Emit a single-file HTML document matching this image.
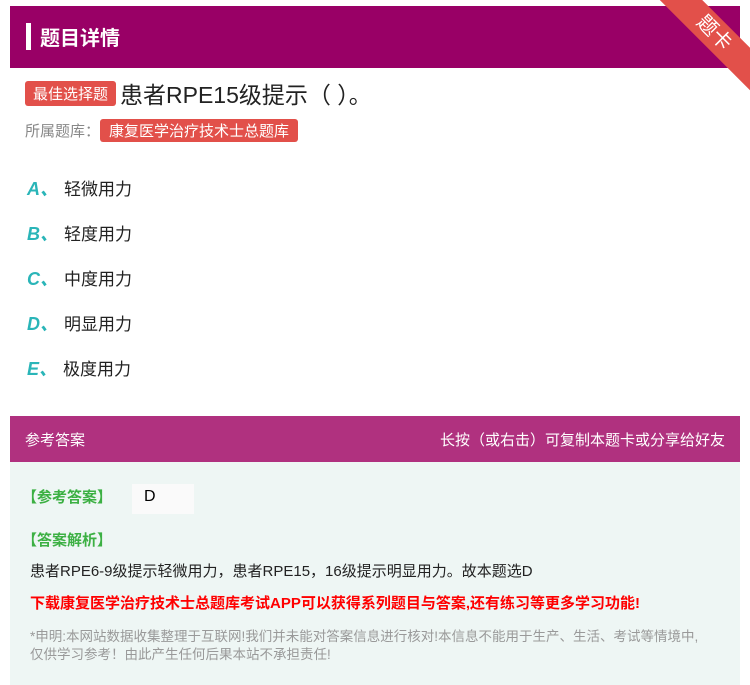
<!DOCTYPE html>
<html><head><meta charset="utf-8"><style>
body{margin:0;width:750px;height:685px;background:#fff;font-family:"Liberation Sans","Noto Sans CJK SC",sans-serif;position:relative;overflow:hidden}
.hd{position:absolute;left:10px;top:6px;width:730px;height:62px;background:#990066}
.hd .bar{position:absolute;left:16px;top:17px;width:5px;height:27px;background:#fff}
.hd .t{position:absolute;left:30px;top:16px;color:#fff;font-size:20px;font-weight:bold}
.rib{position:absolute;right:-34px;top:18px;width:140px;height:30px;background:#e2504a;transform:rotate(45deg);color:#fff;text-align:center;font-size:20px;line-height:30px;transform-origin:center}
.tag{display:inline-block;background:#e2504a;color:#fff;border-radius:3px}
.q{position:absolute;left:25px;top:76px;font-size:23px;color:#222}
.q .tag{font-size:15px;padding:2px 8px;vertical-align:4px;margin-right:4px}
.lib{position:absolute;left:25px;top:119px;font-size:15px;color:#888}
.lib .tag{font-size:15px;padding:1px 9px}
.opt{position:absolute;left:27px;font-size:17px;color:#222}
.opt b{color:#2ab5b8;font-style:italic;font-size:18px;margin-right:6px}
.ah{position:absolute;left:10px;top:416px;width:730px;height:46px;background:#b0317f;color:#fff;font-size:15px}
.ab{position:absolute;left:10px;top:462px;width:730px;height:223px;background:#eef6f4}
.g{color:#3cb043;font-weight:bold;font-size:15px}
</style></head><body>
<div class="hd"><div class="bar"></div><div class="t">题目详情</div></div>
<div class="rib">题卡</div>
<div class="q"><span class="tag">最佳选择题</span>患者RPE15级提示（ ）。</div>
<div class="lib">所属题库：<span class="tag">康复医学治疗技术士总题库</span></div>
<div class="opt" style="top:175px"><b>A、</b>轻微用力</div>
<div class="opt" style="top:220px"><b>B、</b>轻度用力</div>
<div class="opt" style="top:265px"><b>C、</b>中度用力</div>
<div class="opt" style="top:310px"><b>D、</b>明显用力</div>
<div class="opt" style="top:355px"><b>E、</b>极度用力</div>
<div class="ah"><span style="position:absolute;left:15px;top:13px">参考答案</span><span style="position:absolute;right:15px;top:13px">长按（或右击）可复制本题卡或分享给好友</span></div>
<div class="ab">
<div style="position:absolute;left:12px;top:24px" class="g">【参考答案】</div>
<div style="position:absolute;left:122px;top:22px;width:62px;height:30px;background:#fafafa;font-size:16px;padding-left:12px;box-sizing:border-box;line-height:26px">D</div>
<div style="position:absolute;left:12px;top:67px" class="g">【答案解析】</div>
<div style="position:absolute;left:20px;top:98px;font-size:15px;color:#222">患者RPE6-9级提示轻微用力，患者RPE15，16级提示明显用力。故本题选D</div>
<div style="position:absolute;left:20px;top:130px;font-size:15px;color:#f00;font-weight:bold">下载康复医学治疗技术士总题库考试APP可以获得系列题目与答案,还有练习等更多学习功能!</div>
<div style="position:absolute;left:20px;top:166px;width:680px;font-size:13.5px;color:#999;line-height:18px">*申明:本网站数据收集整理于互联网!我们并未能对答案信息进行核对!本信息不能用于生产、生活、考试等情境中,仅供学习参考！由此产生任何后果本站不承担责任!</div>
</div>
</body></html>
